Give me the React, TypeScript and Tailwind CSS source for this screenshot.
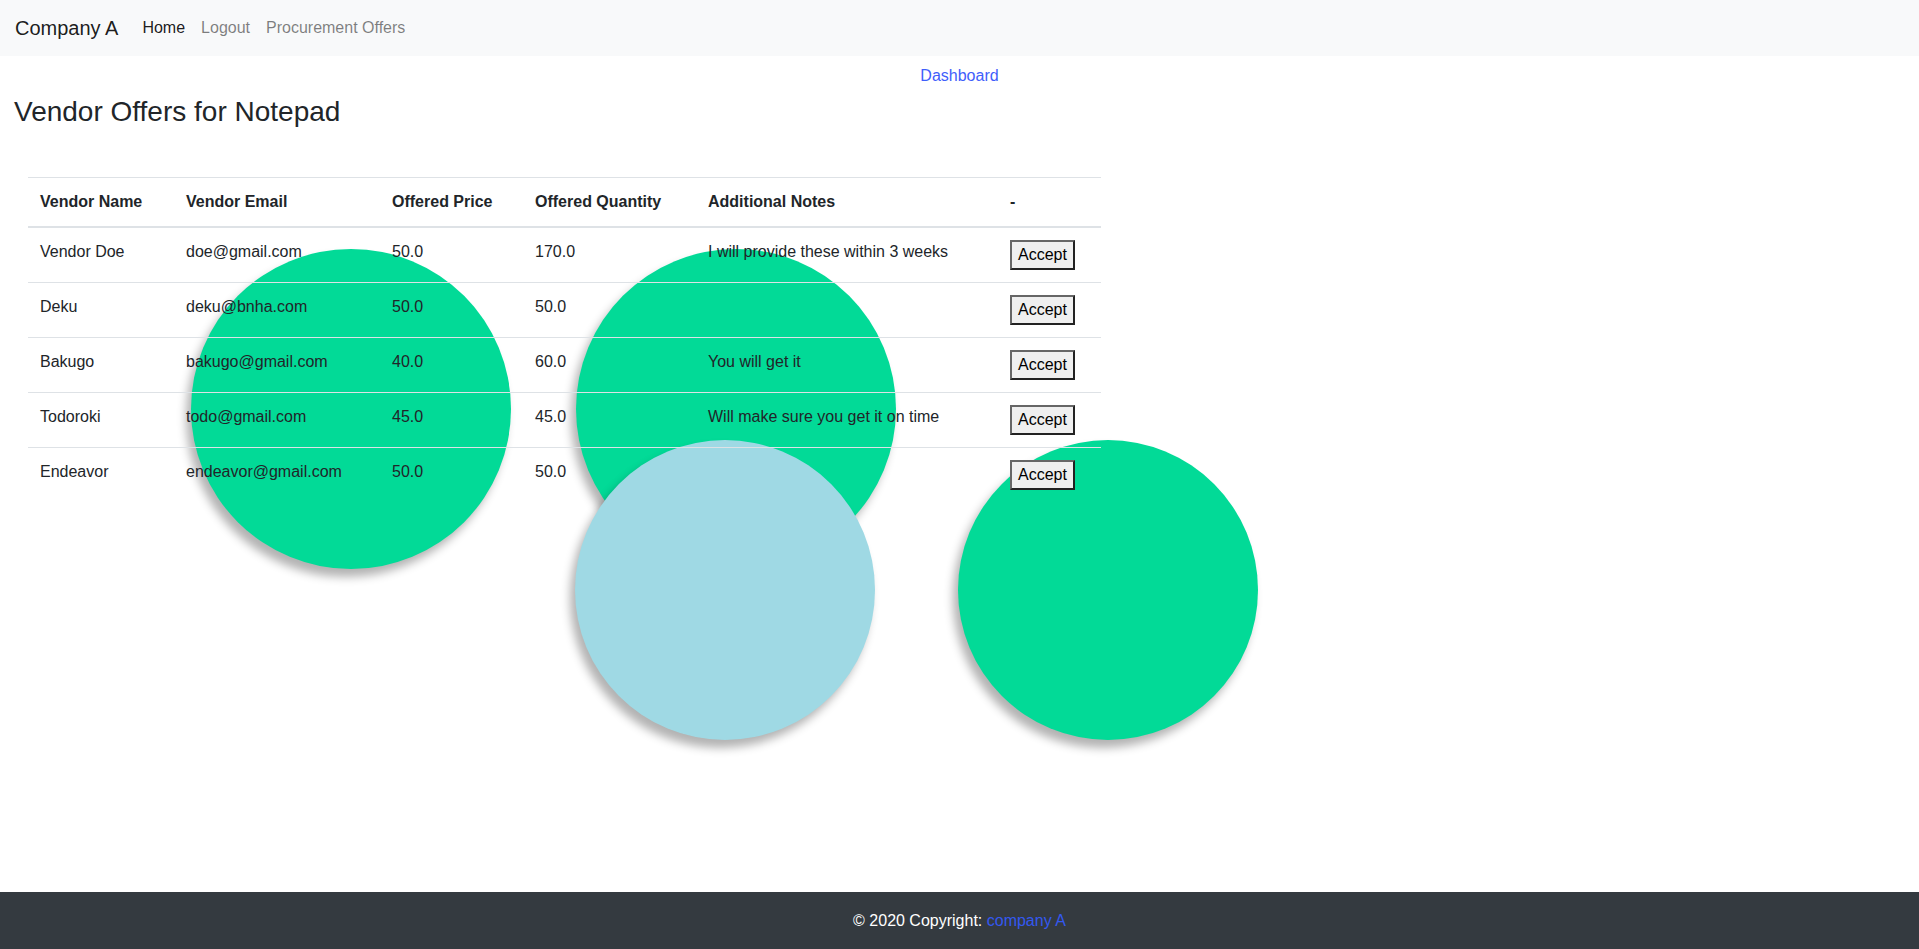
import React from "react";

type Offer = {
  name: string;
  email: string;
  price: string;
  qty: string;
  notes: string;
};

const offers: Offer[] = [
  { name: "Vendor Doe", email: "doe@gmail.com", price: "50.0", qty: "170.0", notes: "I will provide these within 3 weeks" },
  { name: "Deku", email: "deku@bnha.com", price: "50.0", qty: "50.0", notes: "" },
  { name: "Bakugo", email: "bakugo@gmail.com", price: "40.0", qty: "60.0", notes: "You will get it" },
  { name: "Todoroki", email: "todo@gmail.com", price: "45.0", qty: "45.0", notes: "Will make sure you get it on time" },
  { name: "Endeavor", email: "endeavor@gmail.com", price: "50.0", qty: "50.0", notes: "" },
];

export default function App() {
  return (
    <div className="min-h-screen flex flex-col bg-white font-['Liberation_Sans',Arial,sans-serif] text-base leading-6 text-[#212529]">
      <nav className="h-14 shrink-0 bg-[#f8f9fa] flex items-center px-[15px]">
        <a className="text-xl leading-[30px] mr-4 text-black/90">Company A</a>
        <a className="px-2 text-black/90">Home</a>
        <a className="px-2 text-black/50">Logout</a>
        <a className="px-2 text-black/50">Procurement Offers</a>
      </nav>

      <main className="relative flex-1 px-[14px]">
        {/* decorative bubbles sit behind the table */}
        <div className="absolute left-[191px] top-[193px] w-[320px] h-[320px] rounded-full bg-[#02da97] shadow-[-5px_8px_10px_rgba(0,0,0,0.3)]" />
        <div className="absolute left-[576px] top-[193px] w-[320px] h-[320px] rounded-full bg-[#02da97] shadow-[-5px_8px_10px_rgba(0,0,0,0.3)]" />
        <div className="absolute left-[575px] top-[384px] w-[300px] h-[300px] rounded-full bg-[#9fd9e4] shadow-[-5px_8px_10px_rgba(0,0,0,0.3)]" />
        <div className="absolute left-[958px] top-[384px] w-[300px] h-[300px] rounded-full bg-[#02da97] shadow-[-5px_8px_10px_rgba(0,0,0,0.3)]" />

        <div className="pt-2 text-center">
          <a className="text-[#3f5efb]">Dashboard</a>
        </div>

        <h3 className="mt-[7px] text-[28px] leading-[1.2]">Vendor Offers for Notepad</h3>

        <div className="relative z-10 mt-[48px] ml-[14px]">
          <table className="table-fixed w-[1073px] border-separate border-spacing-0 text-left">
            <thead>
              <tr>
                <th className="w-[146px] p-3 align-bottom font-bold border-t border-b-2 border-[#dee2e6]">Vendor Name</th>
                <th className="w-[206px] p-3 align-bottom font-bold border-t border-b-2 border-[#dee2e6]">Vendor Email</th>
                <th className="w-[143px] p-3 align-bottom font-bold border-t border-b-2 border-[#dee2e6]">Offered Price</th>
                <th className="w-[173px] p-3 align-bottom font-bold border-t border-b-2 border-[#dee2e6]">Offered Quantity</th>
                <th className="w-[302px] p-3 align-bottom font-bold border-t border-b-2 border-[#dee2e6]">Additional Notes</th>
                <th className="w-[103px] p-3 align-bottom font-bold border-t border-b-2 border-[#dee2e6]">-</th>
              </tr>
            </thead>
            <tbody>
              {offers.map((o, i) => {
                const cell = i === 0 ? "p-3 align-top" : "p-3 align-top border-t border-[#dee2e6]";
                return (
                  <tr key={o.email}>
                    <td className={cell}>{o.name}</td>
                    <td className={cell}>{o.email}</td>
                    <td className={cell}>{o.price}</td>
                    <td className={cell}>{o.qty}</td>
                    <td className={cell}>{o.notes}</td>
                    <td className={cell}>
                      <button className="bg-[#efefef] text-black leading-6 px-[6px] py-px border-2 border-t-[#666] border-l-[#666] border-r-[#222] border-b-[#222]">
                        Accept
                      </button>
                    </td>
                  </tr>
                );
              })}
            </tbody>
          </table>
        </div>
      </main>

      <footer className="h-[57px] shrink-0 bg-[#343a40] flex items-center justify-center text-white">
        <span>
          © 2020 Copyright: <a className="text-[#3358f0]">company A</a>
        </span>
      </footer>
    </div>
  );
}
